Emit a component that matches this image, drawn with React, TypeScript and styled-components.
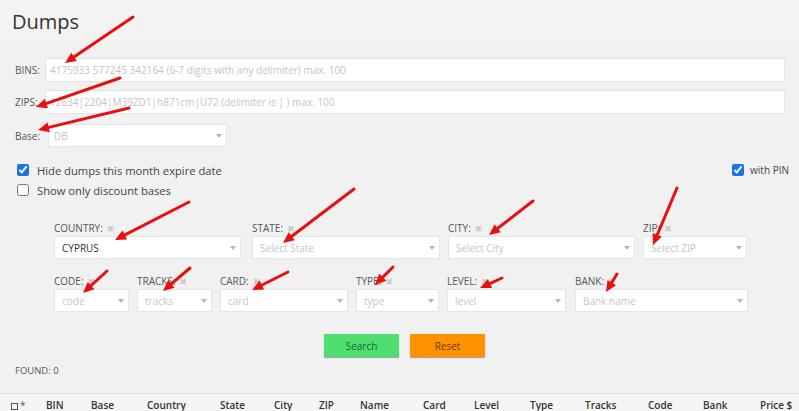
import React from "react";
import styled, { createGlobalStyle } from "styled-components";

const GlobalStyle = createGlobalStyle`
  html, body { margin: 0; padding: 0; }
  body {
    background: #f1f1f1;
    font-family: "Open Sans", "Liberation Sans", sans-serif;
    color: #444;
  }
  * { box-sizing: border-box; }
`;

const Page = styled.div`
  position: relative;
  width: 799px;
  height: 411px;
  overflow: hidden;
  background: #f1f1f1;
`;

const Header = styled.header`
  height: 42px;
  background: #f3f3f3;
  padding: 10px 0 0 12px;
`;

const Title = styled.h1`
  margin: 0;
  font-size: 20px;
  line-height: 24px;
  font-weight: 400;
  color: #333;
`;

const Form = styled.section`
  display: flex;
  flex-direction: column;
  padding: 16px 14px 0 15px;
`;

const FieldRow = styled.div<{ $mt?: number }>`
  display: flex;
  align-items: center;
  margin-top: ${(p) => p.$mt ?? 0}px;
`;

const FieldLabel = styled.label<{ $w: number }>`
  width: ${(p) => p.$w}px;
  flex: none;
  font-size: 10px;
  color: #555;
`;

const TextInput = styled.input`
  flex: 1;
  height: 24px;
  border: 1px solid #e4e4e4;
  background: #fff;
  padding: 0 0 0 4px;
  font-family: "Open Sans", sans-serif;
  font-size: 10px;
  outline: none;
  &::placeholder { color: #c4c4c4; }
`;

const SelectBox = styled.div<{ $w?: number; $h?: number; $pl?: number }>`
  position: relative;
  width: ${(p) => (p.$w ? `${p.$w}px` : "100%")};
  height: ${(p) => p.$h ?? 23}px;
  background: #fff;
  border: 1px solid #e6e6e6;
  display: flex;
  align-items: center;
  padding-left: ${(p) => p.$pl ?? 7}px;
  font-size: 10px;
`;

const SelectValue = styled.span<{ $placeholder?: boolean }>`
  color: ${(p) => (p.$placeholder ? "#c6c6c6" : "#333")};
`;

const Caret = styled.span`
  position: absolute;
  right: 4px;
  top: 50%;
  margin-top: -2px;
  width: 0;
  height: 0;
  border-left: 3.5px solid transparent;
  border-right: 3.5px solid transparent;
  border-top: 4px solid #b5b5b5;
`;

const Checks = styled.div`
  display: flex;
  flex-direction: column;
  margin-top: 13px;
  padding-left: 2px;
`;

const CheckRow = styled.div`
  display: flex;
  align-items: center;
  justify-content: space-between;
  height: 20px;
`;

const CheckLabel = styled.label<{ $size?: number; $pl?: number }>`
  display: flex;
  align-items: center;
  gap: ${(p) => (p.$size === 10 ? 6 : 8)}px;
  padding-left: ${(p) => p.$pl ?? 0}px;
  font-size: ${(p) => p.$size ?? 11.2}px;
  color: #444;
`;

const Box = styled.input`
  width: 12px;
  height: 12px;
  margin: 0;
  accent-color: #1a73e8;
`;

const PinWrap = styled.div`
  padding-right: 10px;
`;

const Filters = styled.div`
  display: flex;
  flex-direction: column;
  gap: 15px;
  margin-top: 21px;
  padding-left: 54px;
`;

const FilterRow = styled.div`
  display: flex;
`;

const FilterField = styled.div<{ $w: number; $ml: number }>`
  width: ${(p) => p.$w}px;
  margin-left: ${(p) => p.$ml}px;
  display: flex;
  flex-direction: column;
  gap: 1px;
`;

const FilterLabel = styled.div`
  height: 14px;
  line-height: 14px;
  font-size: 10px;
  color: #555;
  text-transform: uppercase;
  white-space: nowrap;
`;

const Clear = styled.span`
  margin-left: 4px;
  color: #c8c8c8;
  font-family: "DejaVu Sans", sans-serif;
  font-size: 9px;
`;

const Buttons = styled.div`
  display: flex;
  justify-content: center;
  gap: 11px;
  margin-top: 22px;
  padding-left: 10px;
`;

const Btn = styled.button<{ $kind: "search" | "reset" }>`
  width: 75px;
  height: 23px;
  border: none;
  border-radius: 1px;
  background: ${(p) => (p.$kind === "search" ? "#4ddf6f" : "#ff9200")};
  color: ${(p) => (p.$kind === "search" ? "#22612f" : "#6e3a00")};
  box-shadow: 0 1px 1px rgba(0, 0, 0, 0.35);
  font-family: "Open Sans", sans-serif;
  font-size: 10px;
  padding: 0;
`;

const Found = styled.div`
  margin-top: 7px;
  padding-left: 15px;
  height: 14px;
  line-height: 14px;
  font-size: 9.5px;
  color: #555;
`;

const TableHead = styled.div`
  margin-top: 15px;
  border-top: 1px solid #dcdcdc;
  background: #f5f5f5;
  height: 30px;
  display: grid;
  grid-template-columns: 35px 45px 56px 73px 54px 45px 41px 63px 51px 56px 55px 63px 55px 57px 1fr;
  padding-left: 11px;
  padding-top: 5px;
  font-family: "Open Sans", sans-serif;
  font-weight: 600;
  font-size: 10px;
  color: #333;
  line-height: 12px;
`;

const HeadCell = styled.div`
  white-space: nowrap;
`;

const SelAll = styled.span`
  display: inline-flex;
  align-items: center;
  gap: 2px;
  font-weight: 400;
  color: #555;
`;

const TinyBox = styled.span`
  display: inline-block;
  width: 7px;
  height: 7px;
  border: 1px solid #555;
  margin-top: 3px;
`;

const Overlay = styled.svg`
  position: absolute;
  left: 0;
  top: 0;
  pointer-events: none;
`;

type Arrow = [number, number, number, number];
const ARROWS: Arrow[] = [
  [133, 17, 65, 63],
  [120, 78, 36, 107],
  [129, 108, 38, 130],
  [189, 202, 115, 240],
  [354, 189, 283, 243],
  [533, 201, 489, 235],
  [677, 188, 653, 245],
  [107, 271, 83, 293],
  [190, 268, 163, 291],
  [288, 272, 252, 290],
  [393, 267, 375, 285],
  [502, 278, 480, 288],
  [617, 274, 606, 292],
];

function ArrowShape({ a }: { a: Arrow }) {
  const [x1, y1, x2, y2] = a;
  const dx = x2 - x1;
  const dy = y2 - y1;
  const len = Math.hypot(dx, dy);
  const ux = dx / len;
  const uy = dy / len;
  const L = Math.min(11, len * 0.6);
  const W = 5;
  const bx = x2 - ux * L;
  const by = y2 - uy * L;
  const nx = -uy;
  const ny = ux;
  const pts = `${x2},${y2} ${bx + nx * W},${by + ny * W} ${bx - nx * W},${by - ny * W}`;
  return (
    <g>
      <line x1={x1} y1={y1} x2={bx + ux * 2} y2={by + uy * 2} stroke="#e8100f" strokeWidth={3} strokeLinecap="round" />
      <polygon points={pts} fill="#e8100f" />
    </g>
  );
}

function Select({ value, placeholder, w, h, pl }: { value?: string; placeholder?: string; w?: number; h?: number; pl?: number }) {
  return (
    <SelectBox $w={w} $h={h} $pl={pl}>
      {value ? <SelectValue>{value}</SelectValue> : <SelectValue $placeholder>{placeholder}</SelectValue>}
      <Caret />
    </SelectBox>
  );
}

type F = { label: string; w: number; ml: number; value?: string; placeholder?: string };
const ROW1: F[] = [
  { label: "Country:", w: 187, ml: 0, value: "CYPRUS" },
  { label: "State:", w: 188, ml: 11, placeholder: "Select State" },
  { label: "City:", w: 187, ml: 8, placeholder: "Select City" },
  { label: "ZIP:", w: 104, ml: 8, placeholder: "Select ZIP" },
];
const ROW2: F[] = [
  { label: "Code:", w: 75, ml: 0, placeholder: "code" },
  { label: "Tracks:", w: 75, ml: 8, placeholder: "tracks" },
  { label: "Card:", w: 128, ml: 8, placeholder: "card" },
  { label: "Type:", w: 83, ml: 8, placeholder: "type" },
  { label: "Level:", w: 119, ml: 8, placeholder: "level" },
  { label: "Bank:", w: 173, ml: 9, placeholder: "Bank name" },
];

const COLS = ["BIN", "Base", "Country", "State", "City", "ZIP", "Name", "Card", "Level", "Type", "Tracks", "Code", "Bank", "Price $"];

function FilterLine({ items }: { items: F[] }) {
  return (
    <FilterRow>
      {items.map((f) => (
        <FilterField key={f.label} $w={f.w} $ml={f.ml}>
          <FilterLabel>
            {f.label}
            <Clear>✖</Clear>
          </FilterLabel>
          <Select value={f.value} placeholder={f.placeholder} />
        </FilterField>
      ))}
    </FilterRow>
  );
}

export default function App() {
  return (
    <>
      <GlobalStyle />
      <Page>
        <Header>
          <Title>Dumps</Title>
        </Header>
        <Form>
          <FieldRow>
            <FieldLabel $w={30}>BINS:</FieldLabel>
            <TextInput placeholder="4175933 577245 342164 (6-7 digits with any delimiter) max. 100" />
          </FieldRow>
          <FieldRow $mt={8}>
            <FieldLabel $w={30}>ZIPS:</FieldLabel>
            <TextInput placeholder="12634|2204|M39ZD1|h871cm|U72 (delimiter is | ) max. 100" />
          </FieldRow>
          <FieldRow $mt={10}>
            <FieldLabel $w={33}>Base:</FieldLabel>
            <Select placeholder="DB" w={179} h={23} pl={5} />
          </FieldRow>
        </Form>
        <Checks>
          <CheckRow>
            <CheckLabel $pl={15}>
              <Box type="checkbox" defaultChecked />
              Hide dumps this month expire date
            </CheckLabel>
            <PinWrap>
              <CheckLabel $size={10}>
                <Box type="checkbox" defaultChecked />
                with PIN
              </CheckLabel>
            </PinWrap>
          </CheckRow>
          <CheckRow>
            <CheckLabel $pl={15}>
              <Box type="checkbox" />
              Show only discount bases
            </CheckLabel>
          </CheckRow>
        </Checks>
        <Filters>
          <FilterLine items={ROW1} />
          <FilterLine items={ROW2} />
        </Filters>
        <Buttons>
          <Btn $kind="search">Search</Btn>
          <Btn $kind="reset">Reset</Btn>
        </Buttons>
        <Found>FOUND: 0</Found>
        <TableHead>
          <HeadCell>
            <SelAll>
              <TinyBox />*
            </SelAll>
          </HeadCell>
          {COLS.map((c) => (
            <HeadCell key={c}>{c}</HeadCell>
          ))}
        </TableHead>
        <Overlay width={799} height={411} viewBox="0 0 799 411">
          {ARROWS.map((a, i) => (
            <ArrowShape key={i} a={a} />
          ))}
        </Overlay>
      </Page>
    </>
  );
}
